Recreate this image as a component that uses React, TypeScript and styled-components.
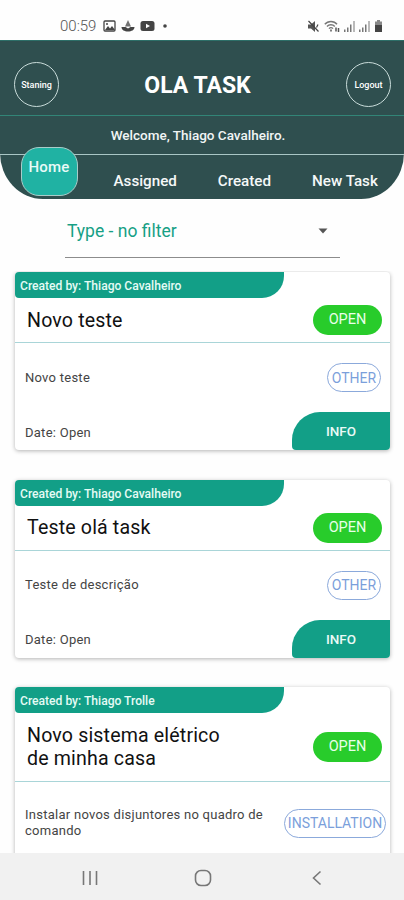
import React from "react";
import styled, { createGlobalStyle } from "styled-components";

const GlobalStyle = createGlobalStyle`
  * { box-sizing: border-box; }
  body { margin: 0; background: #fff; font-family: Roboto, "Liberation Sans", sans-serif; }
`;

const Screen = styled.div`
  width: 404px;
  height: 900px;
  overflow: hidden;
  display: flex;
  flex-direction: column;
  background: #fefefe;
`;

const StatusBar = styled.div`
  height: 40px;
  flex: none;
  display: flex;
  align-items: center;
  justify-content: space-between;
  padding: 12px 21px 0 60px;
  color: #666;
`;

const StatusGroup = styled.div<{ $gap: number }>`
  display: flex;
  align-items: center;
  gap: ${(p) => p.$gap}px;
`;

const Clock = styled.span`
  width: 37px;
  margin-right: 1px;
  font-size: 15px;
  line-height: 16px;
  font-weight: 300;
  white-space: nowrap;
  color: #555;
`;

const Header = styled.header`
  height: 159px;
  flex: none;
  display: flex;
  flex-direction: column;
  background: #2f4f4f;
  border-top: 1px solid #2d6f68;
  border-radius: 0 0 43px 43px / 0 0 46px 46px;
`;

const TitleRow = styled.div`
  height: 75px;
  display: flex;
  align-items: center;
  justify-content: space-between;
  padding: 13px 13px 0 14px;
  border-bottom: 1px solid #328577;
`;

const AppTitle = styled.h1`
  margin: 0 10px 0 0;
  padding-top: 2px;
  font-size: 23px;
  line-height: 28px;
  font-weight: 700;
  color: #fff;
`;

const RoundButton = styled.button`
  width: 45px;
  height: 45px;
  padding: 0;
  border: 1px solid #c9dcda;
  border-radius: 50%;
  background: transparent;
  color: #fff;
  font: 500 9px Roboto, sans-serif;
`;

const Welcome = styled.div`
  height: 39px;
  flex: none;
  display: flex;
  align-items: center;
  justify-content: center;
  padding: 0 8px 1px 0;
  border-bottom: 1px solid #a9c6c5;
  color: #f1f5f5;
  font-size: 13.5px;
  font-weight: 500;
`;

const Tabs = styled.nav`
  height: 44px;
  display: flex;
  padding-left: 21px;
`;

const ActiveTab = styled.div`
  width: 57px;
  height: 49px;
  margin-top: -8px;
  padding: 9px 1px 0 0;
  flex: none;
  border: 1px solid #a9ccc9;
  border-radius: 18px;
  background: #20b2a3;
  color: #e8faf7;
  font-size: 15px;
  line-height: 20px;
  font-weight: 500;
  text-align: center;
  letter-spacing: 0.2px;
`;

const Tab = styled.div<{ $left: number }>`
  margin-left: ${(p) => p.$left}px;
  padding-top: 16px;
  color: #f5f8f8;
  font-size: 15.2px;
  line-height: 20px;
  font-weight: 500;
  white-space: nowrap;
`;

const Filter = styled.div`
  width: 275px;
  height: 40px;
  flex: none;
  margin: 19px 0 13px 65px;
  padding: 0 12px 13px 2px;
  display: flex;
  align-items: center;
  justify-content: space-between;
  border-bottom: 1px solid #8c8c8c;
  color: #16a085;
  font-size: 17.5px;
`;

const CardList = styled.main`
  flex: 1;
  min-height: 0;
  overflow: hidden;
  padding: 1px 14px 0 15px;
  display: flex;
  flex-direction: column;
  gap: 29.5px;
`;

const CardBox = styled.article`
  flex: none;
  overflow: hidden;
  border-radius: 4px;
  background: #fff;
  box-shadow: 0 1px 4px rgba(0, 0, 0, 0.3);
`;

const Ribbon = styled.div`
  width: 269px;
  height: 26px;
  padding-left: 5px;
  border-radius: 0 0 22px 4px;
  background: #129f87;
  color: #e5fbf5;
  font-size: 12.1px;
  line-height: 28px;
  font-weight: 500;
`;

const CardHead = styled.div<{ $tall?: boolean }>`
  height: ${(p) => (p.$tall ? 69 : 45)}px;
  padding: 0 8px 0 12px;
  display: flex;
  align-items: center;
  justify-content: space-between;
  border-bottom: 1px solid #a9d5d8;
`;

const CardTitle = styled.h2`
  margin: 0;
  font-size: 19.6px;
  line-height: 23px;
  font-weight: 400;
  letter-spacing: 0.15px;
  color: #111;
  white-space: pre-line;
`;

const OpenPill = styled.span`
  width: 69px;
  height: 30px;
  flex: none;
  border-radius: 15px;
  background: #28cc2b;
  color: #e9ffe9;
  font-size: 14.5px;
  line-height: 30px;
  text-align: center;
`;

const CardBody = styled.div<{ $tall?: boolean }>`
  height: ${(p) => (p.$tall ? 82 : 69)}px;
  padding: 0 ${(p) => (p.$tall ? 4 : 9)}px 0 10px;
  display: flex;
  align-items: center;
  justify-content: space-between;
`;

const BodyText = styled.p`
  margin: 0;
  font-size: 13px;
  line-height: 16px;
  letter-spacing: 0.26px;
  color: #444;
  white-space: pre-line;
`;

const DateText = styled(BodyText)`
  padding-top: 3px;
`;

const KindPill = styled.span<{ $width: number }>`
  width: ${(p) => p.$width}px;
  height: 29px;
  flex: none;
  display: flex;
  align-items: center;
  justify-content: center;
  border: 1px solid #8ba9db;
  border-radius: 15px;
  color: #7b9fdb;
  font-size: 14px;
`;

const CardFoot = styled.div`
  height: 38px;
  padding-left: 10px;
  display: flex;
  align-items: center;
  justify-content: space-between;
`;

const InfoButton = styled.button`
  width: 98px;
  height: 38px;
  padding: 0;
  border: 0;
  border-radius: 28px 0 0 4px;
  background: #129f87;
  color: #eafaf6;
  font: 500 13.5px Roboto, sans-serif;
`;

const NavBar = styled.footer`
  height: 47px;
  flex: none;
  display: grid;
  grid-template-columns: 146px 80px 148px;
  justify-items: center;
  align-items: center;
  padding: 2px 0 0 17px;
  background: #f1f1f1;
`;

const GalleryIcon = () => (
  <svg width="13" height="12" viewBox="0 0 13 12">
    <rect x="1" y="1" width="11" height="10" rx="1" fill="none" stroke="#444" strokeWidth="1.3" />
    <path d="M2 10l3-4 2 2.5L9 6l3 4z" fill="#444" />
    <circle cx="4" cy="4" r="1" fill="#444" />
  </svg>
);

const SailIcon = () => (
  <svg width="14" height="12" viewBox="0 0 14 12" fill="#444">
    <path d="M7 0l3 6.5H4z" opacity=".75" />
    <path d="M.5 7h4l2.5 1.5L9.5 7h4c0 3-3 4.500-6.500 4.500S.5 10 .5 7z" />
  </svg>
);

const VideoIcon = () => (
  <svg width="15" height="12" viewBox="0 0 15 12">
    <rect x="0.5" y="1" width="14" height="10" rx="2.5" fill="#444" />
    <path d="M6 3.7v4.600L10 6z" fill="#fff" />
  </svg>
);

const MuteIcon = () => (
  <svg width="13" height="13" viewBox="0 0 13 13">
    <path d="M1 4.500h3l4-3.500v11L4 8.500H1z" fill="#555" />
    <path d="M1.500 1l10 10.500M9.500 7.500l1.500-3" stroke="#444" strokeWidth="1.2" fill="none" />
  </svg>
);

const WifiIcon = () => (
  <svg width="16" height="13" viewBox="0 0 16 13" fill="none" stroke="#777" strokeWidth="1.4">
    <path d="M.8 4.200C4 .5 10 .5 13 4.200M3 6.500c2-2.300 5.800-2.300 7.800 0M5 8.600c1.200-1.300 2.800-1.300 4 0" />
    <path d="M7 9.500v2M12 7.500v4M14.500 8v4" stroke="#555" strokeWidth="1.5" />
  </svg>
);

const SignalIcon = () => (
  <svg width="11" height="12" viewBox="0 0 11 12" fill="#777">
    <path d="M0 9.500h1.500v2.500H0zM3 7.500h1.500v4.500H3zM6 4.500h1.500v7.500H6zM9.500 1h1v11h-1z" />
  </svg>
);

const BatteryIcon = () => (
  <svg width="9" height="12" viewBox="0 0 9 12">
    <path d="M3 0h3v1.500h2V12H1V1.500h2z" fill="#888" />
    <path d="M1 5h7v7H1z" fill="#444" />
  </svg>
);

type Task = {
  author: string;
  title: string;
  description: string;
  kind: string;
  kindWidth: number;
  date?: string;
  tall?: boolean;
};

const tasks: Task[] = [
  { author: "Thiago Cavalheiro", title: "Novo teste", description: "Novo teste", kind: "OTHER", kindWidth: 54, date: "Open" },
  { author: "Thiago Cavalheiro", title: "Teste olá task", description: "Teste de descrição", kind: "OTHER", kindWidth: 54, date: "Open" },
  {
    author: "Thiago Trolle",
    title: "Novo sistema elétrico\nde minha casa",
    description: "Instalar novos disjuntores no quadro de\ncomando",
    kind: "INSTALLATION",
    kindWidth: 102,
    tall: true,
  },
];

const TaskCard = ({ task }: { task: Task }) => (
  <CardBox>
    <Ribbon>Created by: {task.author}</Ribbon>
    <CardHead $tall={task.tall}>
      <CardTitle>{task.title}</CardTitle>
      <OpenPill>OPEN</OpenPill>
    </CardHead>
    <CardBody $tall={task.tall}>
      <BodyText>{task.description}</BodyText>
      <KindPill $width={task.kindWidth}>{task.kind}</KindPill>
    </CardBody>
    {task.date && (
      <CardFoot>
        <DateText>Date: {task.date}</DateText>
        <InfoButton>INFO</InfoButton>
      </CardFoot>
    )}
  </CardBox>
);

export default function App() {
  return (
    <>
      <GlobalStyle />
      <Screen>
        <StatusBar>
          <StatusGroup $gap={5}>
            <Clock>00:59</Clock>
            <GalleryIcon />
            <SailIcon />
            <VideoIcon />
            <svg width="14" height="6" viewBox="0 0 14 6"><circle cx="5" cy="3" r="1.8" fill="#444" /></svg>
          </StatusGroup>
          <StatusGroup $gap={4}>
            <MuteIcon />
            <WifiIcon />
            <SignalIcon />
            <SignalIcon />
            <BatteryIcon />
          </StatusGroup>
        </StatusBar>
        <Header>
          <TitleRow>
            <RoundButton>Staning</RoundButton>
            <AppTitle>OLA TASK</AppTitle>
            <RoundButton>Logout</RoundButton>
          </TitleRow>
          <Welcome>Welcome, Thiago Cavalheiro.</Welcome>
          <Tabs>
            <ActiveTab>Home</ActiveTab>
            <Tab $left={35.5}>Assigned</Tab>
            <Tab $left={41}>Created</Tab>
            <Tab $left={41}>New Task</Tab>
          </Tabs>
        </Header>
        <Filter>
          <span>Type - no filter</span>
          <svg width="10" height="6" viewBox="0 0 10 6"><path d="M0.5 0.5h9L5 5.500z" fill="#555" /></svg>
        </Filter>
        <CardList>
          {tasks.map((task) => (
            <TaskCard key={task.title} task={task} />
          ))}
        </CardList>
        <NavBar>
          <svg width="16" height="16" viewBox="0 0 16 16"><path d="M1.500 1v14M8 1v14M14.500 1v14" stroke="#777" strokeWidth="1.6" /></svg>
          <svg width="18" height="18" viewBox="0 0 18 18"><rect x="1.5" y="1.5" width="15" height="15" rx="5.5" fill="none" stroke="#777" strokeWidth="1.6" /></svg>
          <svg width="10" height="16" viewBox="0 0 10 16"><path d="M8.500 1.500L1.500 8l7 6.500" fill="none" stroke="#777" strokeWidth="1.6" /></svg>
        </NavBar>
      </Screen>
    </>
  );
}
